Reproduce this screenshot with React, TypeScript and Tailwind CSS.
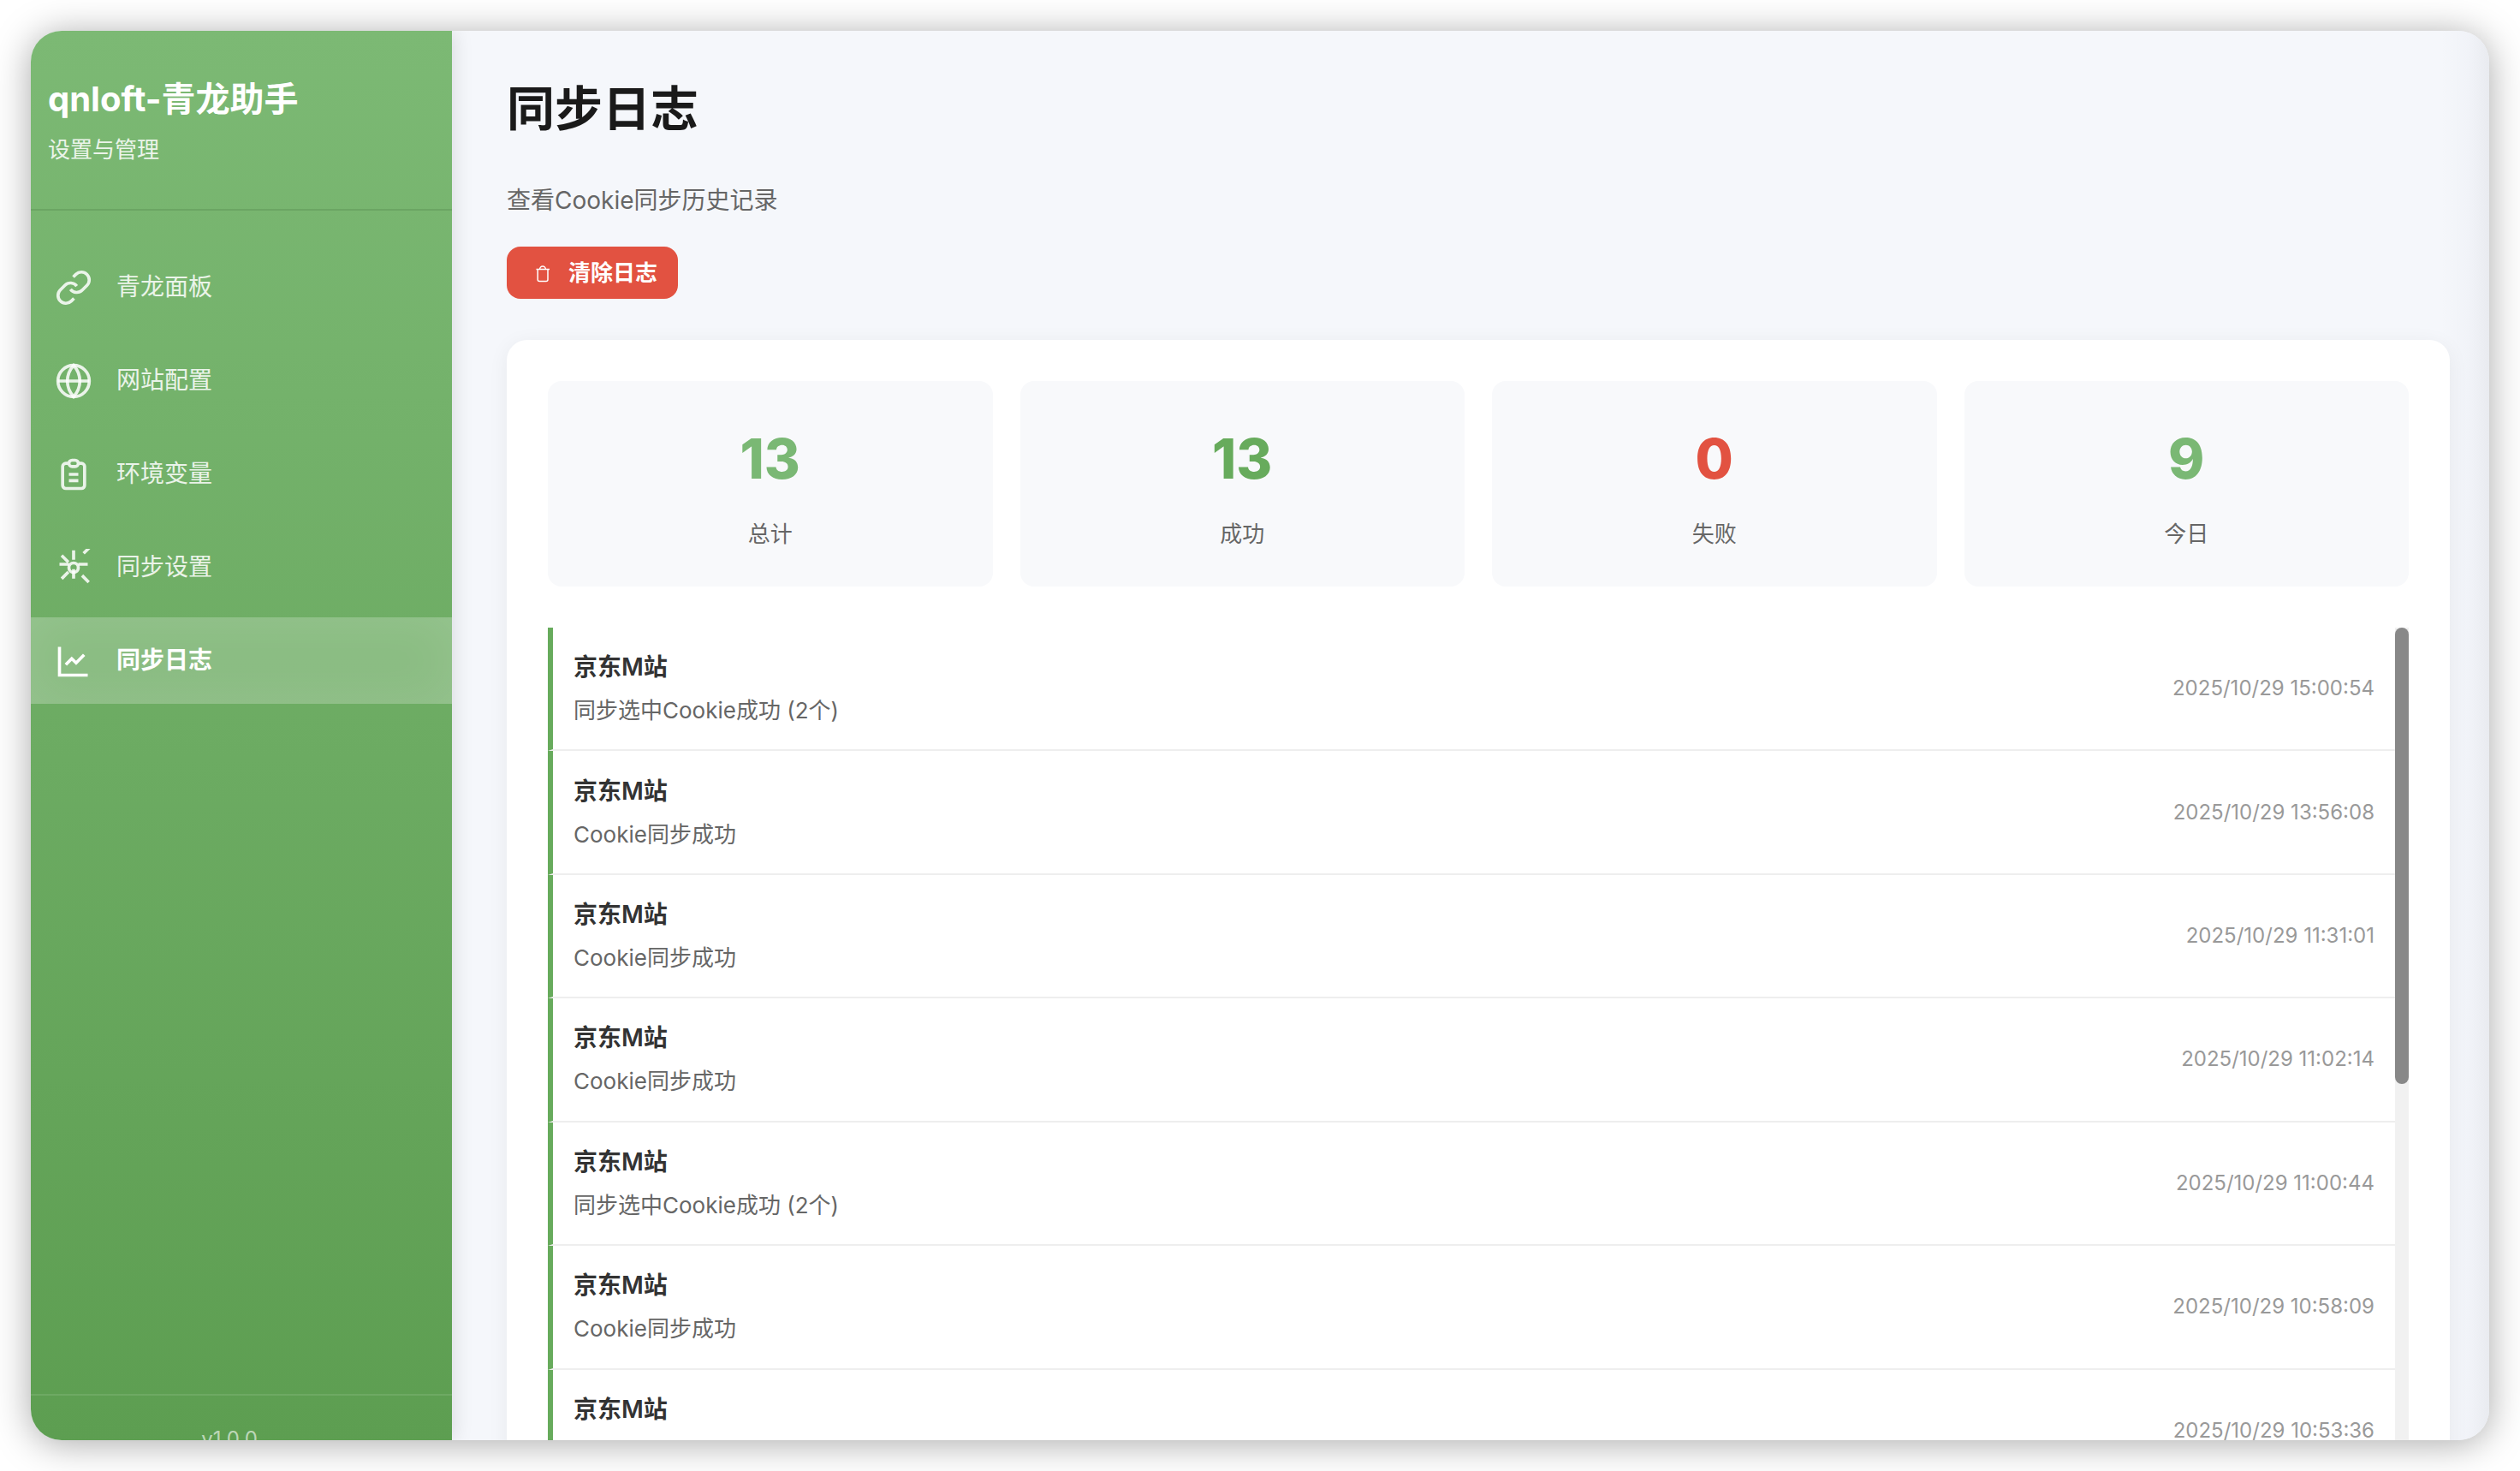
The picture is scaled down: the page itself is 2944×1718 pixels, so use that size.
import type { ReactNode } from 'react'

const ICONS: Record<string, ReactNode> = {
  link: (
    <>
      <path d="M10 13a5 5 0 0 0 7.54.54l3-3a5 5 0 0 0-7.07-7.07l-1.72 1.71" />
      <path d="M14 11a5 5 0 0 0-7.54-.54l-3 3a5 5 0 0 0 7.07 7.07l1.71-1.71" />
    </>
  ),
  globe: (
    <>
      <circle cx="12" cy="12" r="10" />
      <path d="M2 12h20" />
      <path d="M12 2a15.3 15.3 0 0 1 4 10 15.3 15.3 0 0 1-4 10 15.3 15.3 0 0 1-4-10 15.3 15.3 0 0 1 4-10z" />
    </>
  ),
  clipboard: (
    <>
      <path d="M9 5H7a2 2 0 0 0-2 2v12a2 2 0 0 0 2 2h10a2 2 0 0 0 2-2V7a2 2 0 0 0-2-2h-2M9 5a2 2 0 0 0 2 2h2a2 2 0 0 0 2-2M9 5a2 2 0 0 1 2-2h2a2 2 0 0 1 2 2" />
      <path d="M9 12h6M9 16h6" />
    </>
  ),
  spark: (
    <>
      <circle cx="12" cy="12" r="3" />
      <path d="M12 1v6M12 13v6M3 9.8h6M15 9.8h6M4.4 4.2l4.24 4.24M18.36 2.9l4.24-4.24M4.4 19l4.24-4.24M17.4 17l4.24 4.24" />
    </>
  ),
  chart: (
    <>
      <path d="M3 3v18h18" />
      <path d="m18.7 8-5.1 5.2-2.8-2.7L7 14.3" />
    </>
  ),
}

const NAV = [
  { label: '青龙面板', icon: 'link', active: false },
  { label: '网站配置', icon: 'globe', active: false },
  { label: '环境变量', icon: 'clipboard', active: false },
  { label: '同步设置', icon: 'spark', active: false },
  { label: '同步日志', icon: 'chart', active: true },
]

const STATS = [
  { value: '13', label: '总计', color: 'text-[#7ab874]' },
  { value: '13', label: '成功', color: 'text-[#67ab5c]' },
  { value: '0', label: '失败', color: 'text-[#e25241]' },
  { value: '9', label: '今日', color: 'text-[#7ab874]' },
]

const LOGS = [
  { message: '同步选中Cookie成功 (2个)', time: '2025/10/29 15:00:54' },
  { message: 'Cookie同步成功', time: '2025/10/29 13:56:08' },
  { message: 'Cookie同步成功', time: '2025/10/29 11:31:01' },
  { message: 'Cookie同步成功', time: '2025/10/29 11:02:14' },
  { message: '同步选中Cookie成功 (2个)', time: '2025/10/29 11:00:44' },
  { message: 'Cookie同步成功', time: '2025/10/29 10:58:09' },
  { message: 'Cookie同步成功', time: '2025/10/29 10:53:36' },
]

function Sidebar() {
  return (
    <aside className="z-10 flex w-[492px] shrink-0 flex-col bg-linear-to-b from-[#7cb974] to-[#5d9e51] shadow-[4px_0_20px_rgba(0,0,0,0.1)]">
      <header className="border-b-2 border-[#6ba563] px-5 py-12">
        <h2 className="text-[40px] leading-16 font-bold text-white">qnloft-青龙助手</h2>
        <p className="mt-1.5 text-[26px] leading-[42px] text-white/85">设置与管理</p>
      </header>
      <nav className="flex flex-1 flex-col gap-2 pt-[39px]">
        {NAV.map((item) => (
          <a
            key={item.label}
            href="#"
            aria-current={item.active ? 'page' : undefined}
            className={
              item.active
                ? 'flex items-center gap-7 bg-white/20 px-7 py-7 text-[28px] leading-[45px] font-semibold text-white shadow-[inset_0_0_60px_rgba(255,255,255,0.1)]'
                : 'flex items-center gap-7 px-7 py-7 text-[28px] leading-[45px] text-white/85'
            }
          >
            <svg viewBox="0 0 24 24" className="size-11 shrink-0" fill="none" stroke="currentColor" strokeWidth="2" aria-hidden="true">
              {ICONS[item.icon]}
            </svg>
            {item.label}
          </a>
        ))}
      </nav>
      <footer className="-mb-[50px] border-t-2 border-white/10 pt-8 pr-7 pb-8 text-center text-2xl leading-[38px] text-white/60">
        v1.0.0
      </footer>
    </aside>
  )
}

function StatCard({ value, label, color }: { value: string; label: string; color: string }) {
  return (
    <div className="rounded-2xl bg-[#f8f9fb] py-10 text-center">
      <div className={`text-[64px] leading-[102px] font-extrabold ${color}`}>{value}</div>
      <div className="mt-4 text-[26px] leading-[42px] text-[#666]">{label}</div>
    </div>
  )
}

function LogList() {
  return (
    <div className="mt-12 flex h-[1000px] overflow-hidden">
      <ul className="grid min-h-[1011px] flex-1 auto-rows-fr self-start">
        {LOGS.map((log) => (
          <li
            key={log.time}
            className="flex items-center justify-between border-b-2 border-l-6 border-b-[#eee] border-l-[#67ab5c] px-6 py-6"
          >
            <div>
              <div className="text-[28px] leading-11 font-semibold text-[#333]">京东M站</div>
              <div className="mt-2 text-[26px] leading-[42px] text-[#666]">{log.message}</div>
            </div>
            <time className="text-2xl text-[#999]">{log.time}</time>
          </li>
        ))}
      </ul>
      <div className="w-4 bg-[#f1f1f1]">
        <div className="h-[533px] rounded-lg bg-[#888]" />
      </div>
    </div>
  )
}

export default function App() {
  return (
    <div className="h-screen overflow-hidden bg-white p-9 font-['Inter','Noto_Sans_CJK_SC',sans-serif]">
      <div className="flex h-full overflow-hidden rounded-[36px] bg-[#f5f7fb] shadow-[0_4px_44px_rgba(0,0,0,0.34)]">
        <Sidebar />
        <main className="min-w-0 flex-1 bg-[linear-gradient(to_left,#e9ebf0,#f1f3f8_24px,#f5f7fb_56px)] pt-[46px] pr-[46px] pl-16">
          <h1 className="text-[56px] leading-[90px] font-bold text-[#1a1a1a]">同步日志</h1>
          <p className="mt-10 text-[28px] leading-11 text-[#666]">查看Cookie同步历史记录</p>
          <button
            type="button"
            className="mt-8 flex items-center gap-3 rounded-2xl bg-[#e25241] px-6 py-2.5 text-[26px] leading-[41px] font-semibold text-white"
          >
            <svg viewBox="0 0 36 36" className="size-9" fill="none" stroke="currentColor" strokeWidth="1.5" aria-hidden="true">
              <path d="M10.5 13.5h15.5M12.2 13.5v12a2 2 0 0 0 2 2h7.8a2 2 0 0 0 2-2v-12M14.6 13.5a3.4 3.6 0 0 1 6.8 0" />
            </svg>
            清除日志
          </button>
          <section className="mt-12 rounded-[24px] bg-white p-12 shadow-[0_4px_24px_rgba(0,0,0,0.06)]">
            <div className="grid grid-cols-4 gap-8">
              {STATS.map((stat) => (
                <StatCard key={stat.label} {...stat} />
              ))}
            </div>
            <LogList />
          </section>
        </main>
      </div>
    </div>
  )
}
